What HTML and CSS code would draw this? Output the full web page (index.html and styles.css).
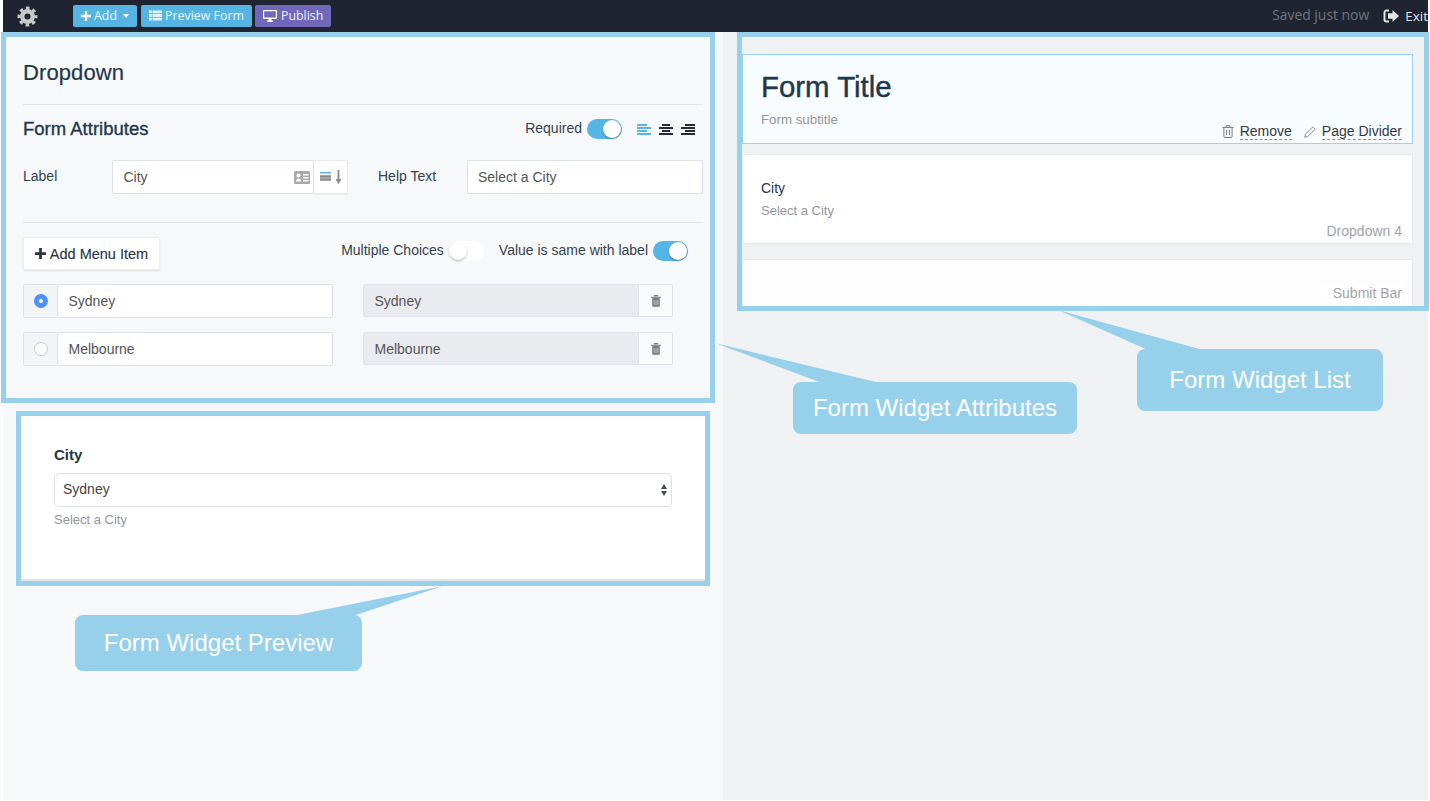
FILE: index.html
```html
<!DOCTYPE html>
<html lang="en">
<head>
    <meta charset="UTF-8">
    <meta name="viewport" content="width=device-width, initial-scale=1.0">
    <title>Form Builder</title>
    <link rel="stylesheet" href="styles.css">
</head>
<body>
    <div class="app">
        <header class="topbar">
            <svg class="gear" viewBox="0 0 24 24" width="21" height="21">
                <circle cx="12" cy="12" r="6" fill="none" stroke="#c9c9c9" stroke-width="5"/>
                <circle cx="12" cy="12" r="9.6" fill="none" stroke="#c9c9c9" stroke-width="3.6" stroke-dasharray="4 3.54" stroke-dashoffset="2"/>
            </svg>
            <div class="top-buttons">
                <button class="top-btn btn-add">
                    <svg viewBox="0 0 12 12" width="10" height="10"><path d="M4.6 0h2.8v4.6H12v2.8H7.400V12H4.600V7.400H0V4.600h4.600z" fill="#fff"/></svg>
                    Add
                    <span class="caret"></span>
                </button>
                <button class="top-btn btn-preview">
                    <svg viewBox="0 0 14 11" width="13" height="11"><path d="M0 0h14v3H0zM0 4h14v3H0zM0 8h14v3H0z" fill="#dff1fa"/><path d="M3.500 0v11" stroke="#55b4e2" stroke-width=".8"/></svg>
                    Preview Form
                </button>
                <button class="top-btn btn-publish">
                    <svg viewBox="0 0 14 12" width="14" height="12"><path d="M1 0h12a1 1 0 0 1 1 1v7a1 1 0 0 1-1 1H8.500v1.500H10V12H4v-1.500h1.500V9H1a1 1 0 0 1-1-1V1a1 1 0 0 1 1-1zm.200 1.200v6.200h11.600V1.200z" fill="#fff"/></svg>
                    Publish
                </button>
            </div>
            <div class="save-status">Saved just now</div>
            <a class="exit-link">
                <svg viewBox="0 0 16 14" width="16" height="14"><path d="M6 1.500H3.500A2 2 0 0 0 1.500 3.500v7a2 2 0 0 0 2 2H6" fill="none" stroke="#e4e5e7" stroke-width="2"/><path d="M9.500 1L16 7l-6.500 6V9.700H5V4.300h4.500z" fill="#e4e5e7"/></svg>
                Exit
            </a>
        </header>

        <div class="workspace">
            <main class="editor">
                <section class="attrs">
                    <h2 class="attrs-title">Dropdown</h2>
                    <div class="rule"></div>

                    <div class="attrs-head">
                        <h3>Form Attributes</h3>
                        <div class="head-right">
                            <span class="field-label">Required</span>
                            <span class="toggle on"></span>
                            <div class="align-icons">
                                <svg viewBox="0 0 14 11" width="14" height="11"><path d="M0 1h10M0 4h14M0 7h10M0 10h14" stroke="#55b5e4" stroke-width="1.800"/></svg>
                                <svg viewBox="0 0 14 11" width="14" height="11"><path d="M3 1h8M0 4h14M3 7h8M0 10h14" stroke="#252a36" stroke-width="1.800"/></svg>
                                <svg viewBox="0 0 14 11" width="14" height="11"><path d="M4 1h10M0 4h14M4 7h10M0 10h14" stroke="#252a36" stroke-width="1.800"/></svg>
                            </div>
                        </div>
                    </div>

                    <div class="label-row">
                        <label class="field-label label-col">Label</label>
                        <div class="input-group label-group">
                            <div class="input-with-icon">
                                <input class="text-input" value="City">
                                <svg class="card-icon" viewBox="0 0 16 13" width="16" height="13">
                                    <rect width="16" height="13" rx="1.500" fill="#a9a9a9"/>
                                    <circle cx="4.500" cy="4.500" r="2" fill="#fff"/>
                                    <path d="M1.800 10.500c0-4 5.400-4 5.400 0zM9 3h5.500v1.500H9zM9 6h5.500v1.500H9zM9 9h5.500v1.500H9z" fill="#fff"/>
                                </svg>
                            </div>
                            <button class="addon-btn sort-btn">
                                <svg viewBox="0 0 23 14" width="23" height="14"><path d="M0 2.700h11" stroke="#5ab5e4" stroke-width="1.600"/><path d="M0 6.500h11M0 9.500h11" stroke="#8a8a8a" stroke-width="2.500"/><path d="M18.500 0v10" stroke="#8a8a8a" stroke-width="1.800"/><path d="M15.500 9h6l-3 5z" fill="#8a8a8a"/></svg>
                            </button>
                        </div>
                        <label class="field-label help-col">Help Text</label>
                        <input class="text-input help-input" value="Select a City">
                    </div>

                    <div class="rule rule-second"></div>

                    <div class="menu-head">
                        <button class="add-item">
                            <svg viewBox="0 0 12 12" width="11" height="11"><path d="M4.500 0h3v4.500H12v3H7.500V12h-3V7.500H0v-3h4.500z" fill="#2d3542"/></svg>
                            Add Menu Item
                        </button>
                        <div class="menu-switches">
                            <span class="field-label">Multiple Choices</span>
                            <span class="toggle"></span>
                            <span class="field-label value-label">Value is same with label</span>
                            <span class="toggle on"></span>
                        </div>
                    </div>

                    <div class="menu-item">
                        <div class="input-group item-label">
                            <span class="radio-addon"><span class="radio checked"></span></span>
                            <input class="text-input" value="Sydney">
                        </div>
                        <div class="input-group item-value">
                            <input class="text-input disabled" value="Sydney" disabled>
                            <button class="addon-btn trash-btn">
                                <svg viewBox="0 0 12 14" width="10" height="12"><path d="M4 1.200V.5h4v.7M0 2.500h12" fill="none" stroke="#777" stroke-width="1.300"/><path d="M1.500 3.500h9V13a1 1 0 0 1-1 1h-7a1 1 0 0 1-1-1z" fill="#777"/><path d="M3.800 5.500v6.500M6 5.500v6.500M8.200 5.500v6.500" stroke="#e4e4e4" stroke-width=".8"/></svg>
                            </button>
                        </div>
                    </div>
                    <div class="menu-item">
                        <div class="input-group item-label">
                            <span class="radio-addon"><span class="radio"></span></span>
                            <input class="text-input" value="Melbourne">
                        </div>
                        <div class="input-group item-value">
                            <input class="text-input disabled" value="Melbourne" disabled>
                            <button class="addon-btn trash-btn">
                                <svg viewBox="0 0 12 14" width="10" height="12"><path d="M4 1.200V.5h4v.7M0 2.500h12" fill="none" stroke="#777" stroke-width="1.300"/><path d="M1.500 3.500h9V13a1 1 0 0 1-1 1h-7a1 1 0 0 1-1-1z" fill="#777"/><path d="M3.800 5.500v6.500M6 5.500v6.500M8.200 5.500v6.500" stroke="#e4e4e4" stroke-width=".8"/></svg>
                            </button>
                        </div>
                    </div>
                </section>

                <section class="preview-card">
                    <label class="preview-label">City</label>
                    <div class="select-wrap">
                        <select class="preview-select">
                            <option>Sydney</option>
                            <option>Melbourne</option>
                        </select>
                    </div>
                    <div class="preview-help">Select a City</div>
                </section>
            </main>

            <aside class="list-pane">
                <div class="widget-card title-card">
                    <div class="title-text">
                        <h1 class="form-title">Form Title</h1>
                        <div class="form-subtitle">Form subtitle</div>
                    </div>
                    <div class="card-actions">
                        <svg viewBox="0 0 12 14" width="12" height="13"><path d="M4 2V.7h4V2M0 2.600h12M1.600 2.600V12.500a1 1 0 0 0 1 1h6.800a1 1 0 0 0 1-1V2.600M4.500 5v6M7.500 5v6" fill="none" stroke="#6b7078" stroke-width="1"/></svg>
                        <span class="action-link">Remove</span>
                        <svg class="pencil" viewBox="0 0 13 13" width="12" height="12"><path d="M.8 12.200l.8-3.400L8.800 1.600a1 1 0 0 1 1.400 0l1.200 1.200a1 1 0 0 1 0 1.400L4.200 11.400z" fill="none" stroke="#7b8087" stroke-width="1"/></svg>
                        <span class="action-link">Page Divider</span>
                    </div>
                </div>
                <div class="widget-card city-card">
                    <div class="widget-name">City</div>
                    <div class="widget-help">Select a City</div>
                    <div class="widget-type">Dropdown 4</div>
                </div>
                <div class="widget-card submit-card">
                    <div class="widget-type">Submit Bar</div>
                </div>
            </aside>
        </div>
    </div>

    <!-- annotations drawn over the screenshot -->
    <div class="frame frame-attrs"></div>
    <div class="frame frame-preview"></div>
    <div class="frame frame-list"></div>

    <svg class="tails" viewBox="0 0 1430 801" width="1430" height="801">
        <polygon points="715,343 822,383 880,383" fill="#97d0ea"/>
        <polygon points="1058,310 1148,350 1203,350" fill="#97d0ea"/>
        <polygon points="443,586 292,616 353,616" fill="#97d0ea"/>
    </svg>
    <div class="callout callout-attrs">Form Widget Attributes</div>
    <div class="callout callout-list">Form Widget List</div>
    <div class="callout callout-preview">Form Widget Preview</div>
</body>
</html>
```

FILE: styles.css
```css
* {
    box-sizing: border-box;
}

body {
    margin: 0;
    background-color: #fff;
    font-family: "Liberation Sans", Arial, sans-serif;
    color: #35424f;
    overflow: hidden;
}

.app {
    width: 1425px;
    height: 800px;
    margin-left: 3px;
    display: flex;
    flex-direction: column;
}

/* top bar */
.topbar {
    height: 32px;
    flex-shrink: 0;
    background-color: #1f2430;
    display: flex;
    align-items: center;
    font-family: "Open Sans", sans-serif;
    overflow: hidden;
}

.gear {
    margin-left: 14px;
}

.top-buttons {
    display: flex;
    gap: 4px;
    margin-left: 35px;
    margin-top: -1px;
}

.top-btn {
    height: 22px;
    padding: 0 8px;
    border: none;
    border-radius: 2px;
    display: flex;
    align-items: center;
    gap: 3px;
    font-family: inherit;
    font-size: 12.400px;
    color: #e8f4fa;
}

.btn-add,
.btn-preview {
    background-color: #55b4e2;
}

.btn-publish {
    margin-left: -1px;
    gap: 4px;
    background-color: #7166b8;
}

.caret {
    margin-left: 3px;
    border-top: 4px solid #fff;
    border-left: 3.500px solid transparent;
    border-right: 3.500px solid transparent;
}

.save-status {
    margin-left: auto;
    margin-top: -4px;
    font-size: 13.900px;
    color: #70747c;
}

.exit-link {
    display: flex;
    align-items: center;
    gap: 6px;
    margin-left: 14px;
    font-size: 13.500px;
    color: #e4e5e7;
    white-space: nowrap;
}

.workspace {
    flex: 1;
    display: flex;
    min-height: 0;
    background-color: #f0f1f3;
}

/* left column */
.editor {
    width: 720px;
    background-color: #f7f8fa;
}

.attrs {
    padding: 26px 20px 0;
    height: 380px;
}

.attrs-title {
    margin: 0;
    font-size: 22px;
    font-weight: normal;
    letter-spacing: 0.1px;
    line-height: 30px;
    color: #22374a;
    -webkit-text-stroke: 0.2px #22374a;
}

.rule {
    height: 1px;
    margin-top: 16px;
    background-color: #e2e4e9;
}

.rule-second {
    margin-top: 28px;
}

.attrs-head {
    margin-top: 14px;
    height: 20px;
    display: flex;
    align-items: center;
    justify-content: space-between;
}

.attrs-head h3 {
    margin: 0;
    font-size: 18.500px;
    font-weight: normal;
    color: #22374a;
    -webkit-text-stroke: 0.35px #22374a;
}

.head-right {
    display: flex;
    align-items: center;
    padding-right: 8px;
}

.field-label {
    font-size: 14px;
    color: #35424f;
}

.head-right .field-label {
    margin-top: -2px;
}

.toggle {
    position: relative;
    display: inline-block;
    width: 35px;
    height: 20px;
    margin-left: 5px;
    border-radius: 10px;
    background-color: #fff;
}

.toggle::after {
    content: "";
    position: absolute;
    left: 0;
    top: 1px;
    width: 18px;
    height: 18px;
    border-radius: 50%;
    background-color: #fff;
    box-shadow: 0 1px 2px rgba(0, 0, 0, 0.3);
}

.toggle.on {
    background-color: #55b5e4;
}

.toggle.on::after {
    left: 16px;
}

.align-icons {
    display: flex;
    gap: 8px;
    margin-left: 15px;
}

.label-row {
    margin-top: 21px;
    display: flex;
    align-items: center;
}

.label-col {
    width: 89px;
    margin-top: -2px;
}

.help-col {
    width: 89px;
    margin-left: 30px;
    margin-top: -2px;
}

.text-input {
    width: 100%;
    height: 34px;
    padding: 0 10.500px;
    border: 1px solid #dde1ea;
    border-radius: 2px;
    background-color: #fff;
    font-family: inherit;
    font-size: 14px;
    color: #555;
}

.help-input {
    width: 236px;
    padding: 0 10px;
}

.input-group {
    display: flex;
}

.label-group {
    width: 236px;
}

.input-with-icon {
    position: relative;
    flex: 1;
}

.card-icon {
    position: absolute;
    right: 4px;
    top: 11px;
}

.addon-btn {
    width: 34px;
    height: 34px;
    flex-shrink: 0;
    padding: 0;
    border: 1px solid #e8eaef;
    border-left: none;
    border-radius: 0 2px 2px 0;
    background-color: #fff;
    box-shadow: 0 1px 1px rgba(0, 0, 0, 0.06);
    display: flex;
    align-items: center;
    justify-content: center;
}

.addon-btn svg {
    display: block;
}

.sort-btn {
    padding-left: 2px;
}

.menu-head {
    margin-top: 14px;
    height: 33px;
    display: flex;
    justify-content: space-between;
}

.add-item {
    width: 137px;
    height: 33px;
    padding: 0;
    border: 1px solid #eceef2;
    border-radius: 2px;
    background-color: #fff;
    box-shadow: 0 1px 2px rgba(0, 0, 0, 0.1);
    display: flex;
    align-items: center;
    justify-content: center;
    gap: 4px;
    font-family: inherit;
    font-size: 14.500px;
    color: #2d3542;
    -webkit-text-stroke: 0.15px #2d3542;
}

.menu-switches {
    display: flex;
    align-items: flex-start;
    padding-right: 15px;
    padding-top: 4px;
}

.menu-switches .field-label {
    line-height: 18px;
}

.value-label {
    margin-left: 15px;
}

.menu-item {
    margin-top: 14px;
    display: flex;
    gap: 30px;
}

.item-label {
    width: 310px;
}

.item-value {
    width: 310px;
}

.radio-addon {
    width: 34px;
    height: 34px;
    flex-shrink: 0;
    border: 1px solid #dde1ea;
    border-right: none;
    border-radius: 2px 0 0 2px;
    background-color: #f2f4f8;
    display: flex;
    align-items: center;
    justify-content: center;
}

.radio {
    width: 14px;
    height: 14px;
    border: 1px solid #c9c9c9;
    border-radius: 50%;
    background-color: #fff;
}

.radio.checked {
    border: 5px solid #4d92f6;
}

.text-input.disabled {
    height: 33px;
    background-color: #eaebef;
    border-radius: 2px 0 0 2px;
}

.trash-btn {
    height: 33px;
    border: 1px solid #dde1ea;
    border-left: none;
    background-color: #f9fafb;
    box-shadow: none;
}

.preview-card {
    margin: 0 18px;
    height: 169px;
    padding: 33px 33px 0;
    background-color: #fff;
    border-bottom: 2px solid #e4e5e8;
}

.preview-label {
    display: block;
    font-size: 15px;
    font-weight: bold;
    line-height: 20px;
    color: #22374a;
}

.select-wrap {
    position: relative;
    margin-top: 8px;
}

.select-wrap::before,
.select-wrap::after {
    content: "";
    position: absolute;
    right: 5px;
    border-left: 3.500px solid transparent;
    border-right: 3.500px solid transparent;
}

.select-wrap::before {
    top: 11px;
    border-bottom: 5px solid #444a55;
}

.select-wrap::after {
    top: 18px;
    border-top: 5px solid #444a55;
}

.preview-select {
    display: block;
    width: 100%;
    height: 34px;
    padding: 0 8px 2px;
    border: 1px solid #dde1ea;
    border-radius: 5px;
    background-color: #fff;
    appearance: none;
    font-family: inherit;
    font-size: 14px;
    color: #444;
}

.preview-help {
    margin-top: 4px;
    font-size: 13px;
    line-height: 18px;
    color: #93969c;
}

/* right column */
.list-pane {
    flex: 1;
    height: 275px;
    padding: 22px 15px 0 19px;
    overflow: hidden;
}

.widget-card {
    background-color: #fff;
    border: 1px solid #e8e9ec;
}

.title-card {
    height: 90px;
    padding: 15px 10px 3px 18px;
    background-color: #f9fcff;
    border-color: #9ad3ee;
    display: flex;
    justify-content: space-between;
    align-items: flex-end;
}

.title-text {
    align-self: flex-start;
}

.form-title {
    margin: 0;
    font-size: 29.400px;
    font-weight: normal;
    line-height: 34px;
    color: #22374a;
    -webkit-text-stroke: 0.4px #22374a;
}

.form-subtitle {
    margin-top: 7px;
    font-size: 13.300px;
    line-height: 18px;
    color: #93969c;
}

.card-actions {
    display: flex;
    align-items: center;
    font-size: 14px;
    color: #333a46;
}

.action-link {
    margin-left: 6px;
    line-height: 16px;
    border-bottom: 1px dashed #8f939a;
}

.pencil {
    margin-left: 12px;
}

.city-card {
    height: 90px;
    margin-top: 10px;
    padding: 23px 10px 0 18px;
}

.widget-name {
    font-size: 14px;
    line-height: 20px;
    color: #22374a;
}

.widget-help {
    margin-top: 4px;
    font-size: 13px;
    line-height: 18px;
    color: #93969c;
}

.widget-type {
    margin-top: 2px;
    font-size: 14px;
    line-height: 18px;
    text-align: right;
    color: #a0a3ad;
}

.submit-card {
    height: 90px;
    margin-top: 15px;
    padding: 24px 10px 0 18px;
    background-color: #fdfdfd;
}

.submit-card .widget-type {
    margin-top: 0;
    margin-left: auto;
    width: 82px;
    background-color: #fff;
}

/* annotation layer */
.frame {
    position: absolute;
    border: 5px solid #97d0ea;
}

.frame-attrs {
    left: 1px;
    top: 32px;
    width: 714px;
    height: 371px;
}

.frame-preview {
    left: 16px;
    top: 411px;
    width: 694px;
    height: 175px;
}

.frame-list {
    left: 737px;
    top: 32px;
    width: 692px;
    height: 279px;
}

.tails {
    position: absolute;
    left: 0;
    top: 0;
    pointer-events: none;
}

.callout {
    position: absolute;
    display: flex;
    align-items: center;
    justify-content: center;
    border-radius: 8px;
    background-color: #97d0ea;
    font-size: 24px;
    color: #fff;
}

.callout-attrs {
    left: 793px;
    top: 382px;
    width: 284px;
    height: 52px;
}

.callout-list {
    left: 1137px;
    top: 349px;
    width: 246px;
    height: 62px;
}

.callout-preview {
    left: 75px;
    top: 615px;
    width: 287px;
    height: 56px;
}
```
